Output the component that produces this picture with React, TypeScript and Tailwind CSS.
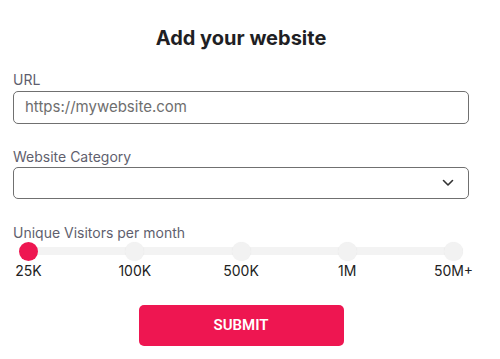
import React from "react";

const stops = ["25K", "100K", "500K", "1M", "50M+"];

export default function App() {
  return (
    <div className="w-[500px] h-[359px] bg-white overflow-hidden" style={{ fontFamily: "Inter, 'Noto Sans', sans-serif" }}>
      <div className="ml-[13px] w-[456px] flex flex-col">
        <h1 className="mt-[25px] h-[26px] text-center text-[20px] leading-[26px] font-bold text-[#1f1f24]">Add your website</h1>

        <label className="mt-[20px] text-[14px] leading-[18px] text-[#5f5f6e]">URL</label>
        <div className="mt-[2px] h-[33px] rounded-[5px] border border-[#707070] flex items-center px-[11px]">
          <span className="text-[15px] text-[#6e6e6e]">https://mywebsite.com</span>
        </div>

        <label className="mt-[24px] text-[14px] leading-[18px] text-[#5f5f6e]">Website Category</label>
        <div className="mt-[1px] h-[32px] rounded-[5px] border border-[#707070] flex items-center justify-end pr-[14px]">
          <svg width="12" height="8" viewBox="0 0 12 8" fill="none">
            <path d="M1.5 1.5 L6 6 L10.5 1.5" stroke="#333" strokeWidth="1.6" strokeLinecap="round" strokeLinejoin="round" />
          </svg>
        </div>

        <label className="mt-[25px] text-[14px] leading-[18px] text-[#5f5f6e]">Unique Visitors per month</label>
        <div className="relative mt-[-1px] h-[20px] mx-[6px]">
          <div className="absolute left-0 right-0 top-[6px] h-[8px] rounded-full bg-[#f3f3f3]" />
          <div className="relative flex justify-between items-center h-full">
            {stops.map((s, i) => (
              <div
                key={s}
                className={
                  i === 0
                    ? "w-[19px] h-[19px] rounded-full bg-[#ee1651]"
                    : "w-[19px] h-[19px] rounded-full bg-[#f2f2f2] shadow-[0_0_1px_rgba(0,0,0,0.08)]"
                }
              />
            ))}
          </div>
        </div>
        <div className="flex justify-between mx-[6px]">
          {stops.map((s) => (
            <div key={s} className="w-[19px] flex justify-center">
              <span className="text-[14px] leading-[20px] text-[#222] whitespace-nowrap">{s}</span>
            </div>
          ))}
        </div>

        <div className="flex justify-center mt-[24px]">
          <button className="w-[205px] h-[41px] rounded-[5px] bg-[#ee1651] text-white text-[15px] font-semibold" style={{ fontFamily: "Roboto, sans-serif" }}>
            SUBMIT
          </button>
        </div>
      </div>
    </div>
  );
}
